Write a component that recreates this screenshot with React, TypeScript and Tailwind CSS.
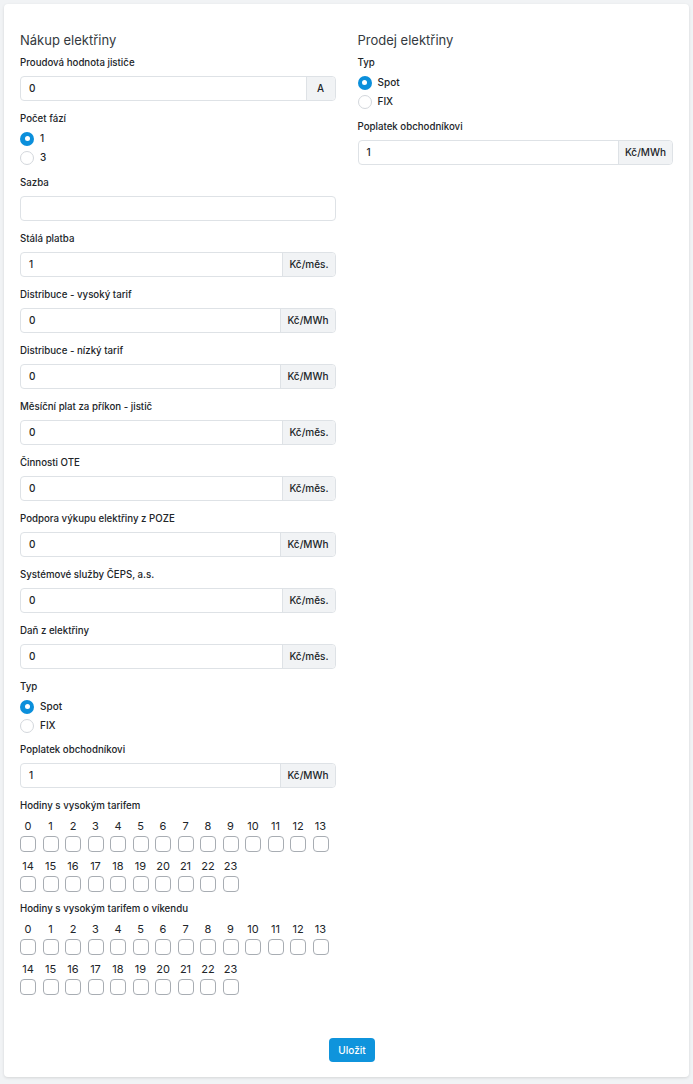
import React from "react";

const font = { fontFamily: "Inter, 'Noto Sans', sans-serif" };

function Label({ children }: { children: React.ReactNode }) {
  return <div className="mb-[6px] text-[9.7px] font-medium leading-[14px] text-[#212529]">{children}</div>;
}

function Field({ label, value, unit }: { label: string; value: string; unit?: string }) {
  return (
    <div className="mb-[11px]">
      <Label>{label}</Label>
      <div className="flex h-[25px] w-full rounded-[4px] border border-[#dee2e6] bg-white">
        <div className="flex flex-1 items-center px-2 text-[10px] font-medium text-[#212529]">{value}</div>
        {unit && (
          <div className="flex min-w-[29px] items-center justify-center rounded-r-[4px] border-l border-[#dee2e6] bg-[#f1f3f5] px-[6px] text-[10px] font-medium text-[#212529]">
            {unit}
          </div>
        )}
      </div>
    </div>
  );
}

function Radio({ label, checked }: { label: string; checked?: boolean }) {
  return (
    <div className="flex h-[19px] items-center gap-[6px]">
      {checked ? (
        <span className="flex size-[14px] items-center justify-center rounded-full bg-[#0b8fdb]">
          <span className="size-[5px] rounded-full bg-white" />
        </span>
      ) : (
        <span className="size-[14px] rounded-full border border-[#d3d7dc] bg-white" />
      )}
      <span className="text-[10px] font-medium text-[#212529]">{label}</span>
    </div>
  );
}

function RadioGroup({ label, options, mb }: { label: string; options: string[]; mb: string }) {
  return (
    <div className={mb}>
      <div className="mb-[3px] text-[9.7px] font-medium leading-[14px] text-[#212529]">{label}</div>
      {options.map((o, i) => (
        <Radio key={o} label={o} checked={i === 0} />
      ))}
    </div>
  );
}

function Hours({ label, mb }: { label: string; mb: string }) {
  const hours = Array.from({ length: 24 }, (_, i) => i);
  return (
    <div className={mb}>
      <Label>{label}</Label>
      <div className="flex flex-wrap gap-x-[6.5px] gap-y-[7px]">
        {hours.map((h) => (
          <div key={h} className="flex w-4 flex-col items-center gap-[3px]">
            <span className="text-[11px] leading-[14px] text-[#212529]">{h}</span>
            <span className="size-4 rounded-[4px] border border-[#a8adb3] bg-white" />
          </div>
        ))}
      </div>
    </div>
  );
}

export default function App() {
  return (
    <div className="min-h-screen bg-[#f1f3f5] p-1" style={font}>
      <div className="rounded-[4px] bg-white px-4 pb-[15px] pt-[26px] shadow-[0_1px_3px_rgba(0,0,0,0.12)]">
        <div className="grid grid-cols-2 gap-[22px]">
          <div>
            <h2 className="mb-[6px] text-[13px] font-normal leading-5 text-[#343a40]">Nákup elektřiny</h2>
            <Field label="Proudová hodnota jističe" value="0" unit="A" />
            <RadioGroup label="Počet fází" options={["1", "3"]} mb="mb-[9px]" />
            <Field label="Sazba" value="" />
            <Field label="Stálá platba" value="1" unit="Kč/měs." />
            <Field label="Distribuce - vysoký tarif" value="0" unit="Kč/MWh" />
            <Field label="Distribuce - nízký tarif" value="0" unit="Kč/MWh" />
            <Field label="Měsíční plat za příkon - jistič" value="0" unit="Kč/měs." />
            <Field label="Činnosti OTE" value="0" unit="Kč/měs." />
            <Field label="Podpora výkupu elektřiny z POZE" value="0" unit="Kč/MWh" />
            <Field label="Systémové služby ČEPS, a.s." value="0" unit="Kč/měs." />
            <Field label="Daň z elektřiny" value="0" unit="Kč/měs." />
            <RadioGroup label="Typ" options={["Spot", "FIX"]} mb="mb-[8px]" />
            <Field label="Poplatek obchodníkovi" value="1" unit="Kč/MWh" />
            <Hours label="Hodiny s vysokým tarifem" mb="mb-[10px]" />
            <Hours label="Hodiny s vysokým tarifem o víkendu" mb="mb-0" />
          </div>
          <div>
            <h2 className="mb-[6px] text-[13px] font-normal leading-5 text-[#343a40]">Prodej elektřiny</h2>
            <RadioGroup label="Typ" options={["Spot", "FIX"]} mb="mb-[9px]" />
            <Field label="Poplatek obchodníkovi" value="1" unit="Kč/MWh" />
          </div>
        </div>
        <div className="mt-[43px] flex justify-center pl-[11px]">
          <button className="h-6 rounded-[4px] bg-[#0f94dc] px-[9px] text-[10px] font-medium text-white">Uložit</button>
        </div>
      </div>
    </div>
  );
}
